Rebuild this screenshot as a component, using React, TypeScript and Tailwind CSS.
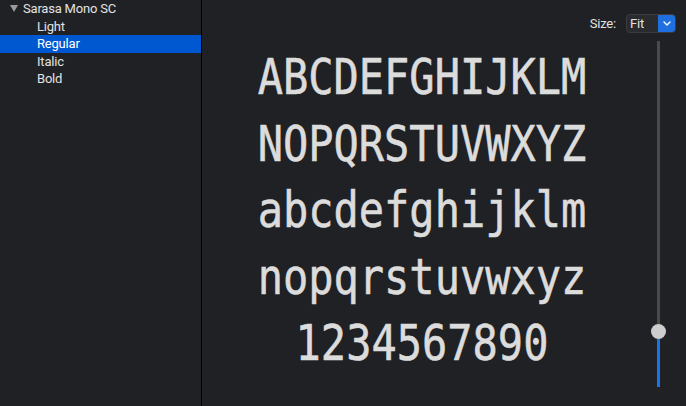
import React from 'react';

const styles = ['Light', 'Regular', 'Italic', 'Bold'];

const sampleLines = [
  'ABCDEFGHIJKLM',
  'NOPQRSTUVWXYZ',
  'abcdefghijklm',
  'nopqrstuvwxyz',
  '1234567890',
];

const Sidebar: React.FC = () => (
  <div className="w-[202px] shrink-0 border-r border-black bg-[#202124] text-[13px] tracking-[-0.2px] text-[#e2e2e2]">
    <div className="flex h-[17.5px] items-center">
      <svg className="ml-[10px] mr-[5px]" width="8" height="7" viewBox="0 0 8 7">
        <path d="M0 0h8L4 7z" fill="#9b9b9b" />
      </svg>
      <span>Sarasa Mono SC</span>
    </div>
    {styles.map(name => (
      <div
        key={name}
        className={`flex h-[17.5px] items-center pl-[37px] ${
          name === 'Regular' ? 'bg-[#0058d0] text-white' : ''
        }`}
      >
        {name}
      </div>
    ))}
  </div>
);

const SizeSelect: React.FC = () => (
  <div className="flex items-center gap-[10px] text-[13px] tracking-[-0.2px] text-[#e2e2e2]">
    <span>Size:</span>
    <div className="flex h-[19px] w-[50px] overflow-hidden rounded-[4px] border border-[#3c3c3f] bg-[#2a2b2e]">
      <span className="flex flex-1 items-center pl-[3px] text-[13px] leading-none">Fit</span>
      <span className="flex w-[17px] items-center justify-center bg-[#1f6fe0]">
        <svg width="8" height="5" viewBox="0 0 8 5" fill="none">
          <path d="M1 1l3 3 3-3" stroke="white" strokeWidth="1.4" strokeLinecap="round" strokeLinejoin="round" />
        </svg>
      </span>
    </div>
  </div>
);

const VerticalSlider: React.FC = () => (
  <div className="flex h-full w-[15px] flex-col items-center">
    <div className="w-[3px] flex-1 bg-[#4a4a4d]" />
    <div className="h-[15px] w-[15px] shrink-0 rounded-full bg-[#cdcdcd]" />
    <div className="h-[48px] w-[3px] bg-[#1a73e8]" />
  </div>
);

const App: React.FC = () => {
  return (
    <div
      className="flex h-[406px] w-[686px] overflow-hidden bg-[#202124]"
      style={{ fontFamily: 'Roboto, "Liberation Sans", sans-serif' }}
    >
      <Sidebar />

      <div className="flex flex-1 flex-col">
        <div className="flex h-[41px] items-start justify-end pr-[10px] pt-[14px]">
          <SizeSelect />
        </div>

        <div className="flex flex-1">
          {/* Font preview */}
          <div className="flex-1 pt-[3px] text-center">
            {sampleLines.map(line => (
              <div
                key={line}
                className="scale-x-[0.84] text-[50px] leading-[66.5px] text-[#dcdcdc] [-webkit-text-stroke:0.6px_#dcdcdc]"
                style={{ fontFamily: '"DejaVu Sans Mono", monospace' }}
              >
                {line}
              </div>
            ))}
          </div>

          <div className="w-[44px] pb-[19px] pl-[9px]">
            <VerticalSlider />
          </div>
        </div>
      </div>
    </div>
  );
};

export default App;
